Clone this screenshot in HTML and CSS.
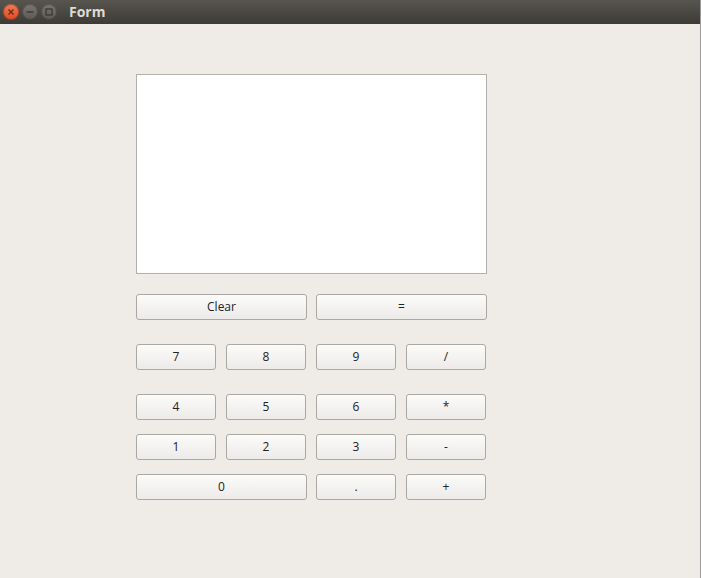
FILE: index.html
```html
<!DOCTYPE html>
<html>
<head>
<meta charset="utf-8">
<link rel="stylesheet" href="styles.css">
</head>
<body>
<div class="window">
  <div class="titlebar">
    <div class="controls">
      <span class="wbtn close"><svg width="16" height="16" viewBox="0 0 16 16"><path d="M5.5 5.5 L10.5 10.5 M10.5 5.5 L5.5 10.5" stroke="#6a2a18" stroke-width="1.4" fill="none"/></svg></span>
      <span class="wbtn"><svg width="16" height="16" viewBox="0 0 16 16"><path d="M4.5 8 H11.5" stroke="#3a3835" stroke-width="1.4"/></svg></span>
      <span class="wbtn"><svg width="16" height="16" viewBox="0 0 16 16"><rect x="5" y="5" width="6" height="6" stroke="#3a3835" stroke-width="1.3" fill="none"/></svg></span>
    </div>
    <span class="title">Form</span>
  </div>
  <div class="content">
    <div class="calc">
      <div class="display"></div>
      <div class="row first">
        <button class="btn wide">Clear</button>
        <button class="btn wide">=</button>
      </div>
      <div class="row r2">
        <button class="btn">7</button>
        <button class="btn">8</button>
        <button class="btn">9</button>
        <button class="btn">/</button>
      </div>
      <div class="row r3">
        <button class="btn">4</button>
        <button class="btn">5</button>
        <button class="btn">6</button>
        <button class="btn">*</button>
      </div>
      <div class="row r4">
        <button class="btn">1</button>
        <button class="btn">2</button>
        <button class="btn">3</button>
        <button class="btn">-</button>
      </div>
      <div class="row r5">
        <button class="btn wide">0</button>
        <button class="btn">.</button>
        <button class="btn">+</button>
      </div>
    </div>
  </div>
</div>
</body>
</html>
```
FILE: styles.css
```css
html, body {
  margin: 0;
  padding: 0;
  width: 701px;
  height: 578px;
  overflow: hidden;
  background: #efebe7;
}
.window {
  width: 700px;
  height: 578px;
  border-right: 1px solid #9c9a98;
  background: #efebe7;
  font-family: "Open Sans", "Noto Sans", sans-serif;
}
.titlebar {
  height: 24px;
  background: linear-gradient(#58554f, #3c3b37);
  display: flex;
  align-items: center;
}
.controls {
  display: flex;
  gap: 3px;
  margin-left: 3px;
}
.wbtn {
  width: 16px;
  height: 16px;
  border-radius: 50%;
  background: linear-gradient(#7a7771, #5b5853);
  display: flex;
  box-shadow: inset 0 0 0 1px rgba(0,0,0,0.25);
}
.wbtn.close {
  background: linear-gradient(#f07c55, #df4a22);
}
.title {
  margin-left: 12px;
  color: #dfdbd2;
  font-family: "Open Sans", "DejaVu Sans", sans-serif;
  font-weight: 700;
  font-size: 14px;
  line-height: 24px;
}
.content {
  padding-top: 50px;
  padding-left: 136px;
}
.calc {
  width: 351px;
  display: flex;
  flex-direction: column;
}
.display {
  height: 198px;
  background: #ffffff;
  border: 1px solid #b3afab;
}
.row {
  display: flex;
  gap: 10px;
}
.row.first { margin-top: 20px; gap: 9px; }
.r2 { margin-top: 24px; }
.r3 { margin-top: 24px; }
.r4 { margin-top: 14px; }
.r5 { margin-top: 14px; }
.r5 .wide { margin-right: -1px; }
.btn {
  width: 80px;
  height: 26px;
  padding: 0;
  box-sizing: border-box;
  border: 1px solid #aba7a3;
  border-radius: 3px;
  background: linear-gradient(#fbfbfa, #edebe9);
  font-family: "Open Sans", "Noto Sans", sans-serif;
  font-size: 12px;
  color: #222;
  line-height: 24px;
}
.btn.wide { width: 171px; }
```
